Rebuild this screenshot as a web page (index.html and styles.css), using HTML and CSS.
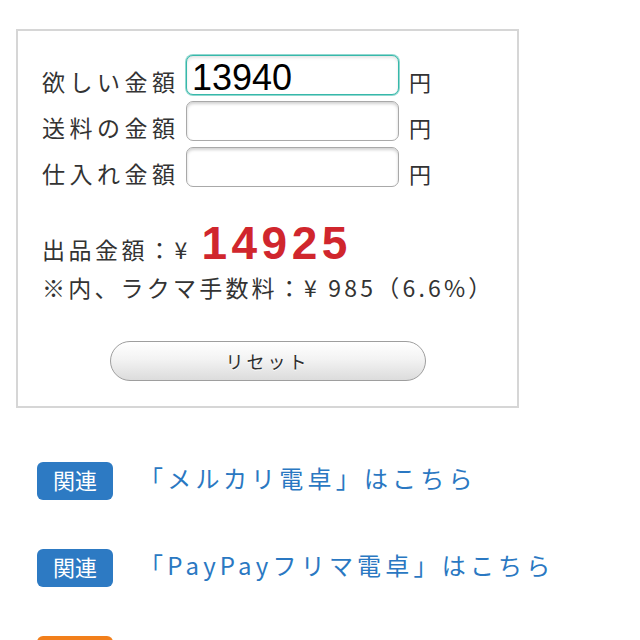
FILE: index.html
```html
<!DOCTYPE html>
<html lang="ja">
<head>
<meta charset="utf-8">
<title>ラクマ電卓</title>
<link rel="stylesheet" href="styles.css">
</head>
<body>
<div class="page">
  <div class="calc">
    <div class="rows">
      <div class="row">
        <label class="label">欲しい金額</label>
        <input class="field active" type="text" value="13940">
        <span class="unit">円</span>
      </div>
      <div class="row">
        <label class="label">送料の金額</label>
        <input class="field" type="text" value="">
        <span class="unit">円</span>
      </div>
      <div class="row">
        <label class="label">仕入れ金額</label>
        <input class="field" type="text" value="">
        <span class="unit">円</span>
      </div>
    </div>
    <div class="result">
      <div class="price-line"><span class="price-label">出品金額：¥ </span><span class="price">14925</span></div>
      <div class="fee-line">※内、ラクマ手数料：¥ 985（6.6%）</div>
    </div>
    <div class="actions">
      <button class="reset" type="button">リセット</button>
    </div>
  </div>
  <ul class="links">
    <li class="link-row"><span class="badge">関連</span><a class="link" href="#">「メルカリ電卓」はこちら</a></li>
    <li class="link-row"><span class="badge">関連</span><a class="link" href="#">「PayPayフリマ電卓」はこちら</a></li>
    <li class="link-row"><span class="badge badge-orange"></span></li>
  </ul>
</div>
</body>
</html>
```
FILE: styles.css
```css
html, body {
  margin: 0;
  padding: 0;
  background: #ffffff;
}
body {
  font-family: "Noto Sans CJK JP", "Noto Sans", sans-serif;
  color: #333333;
}
.page {
  padding: 29px 0 0 16px;
}
.calc {
  box-sizing: border-box;
  width: 503px;
  border: 2px solid #d6d6d6;
  padding: 24px 0 25px 24px;
}
.rows {
  display: flex;
  flex-direction: column;
  gap: 6px;
}
.row {
  display: flex;
  align-items: flex-end;
  height: 40px;
}
.label {
  width: 144px;
  font-size: 23px;
  line-height: 1;
  letter-spacing: 4.5px;
  color: #333333;
  margin-bottom: 2px;
  white-space: nowrap;
}
.field {
  box-sizing: border-box;
  width: 213px;
  height: 40px;
  margin: 0;
  border: 1px solid #a9a9a9;
  border-radius: 7px;
  padding: 6px 6px 0 5px;
  font-family: "Liberation Sans", Arial, sans-serif;
  font-size: 36px;
  color: #000000;
  background: #ffffff;
  box-shadow: inset 0 2px 3px rgba(0, 0, 0, 0.18);
  outline: none;
}
.field.active {
  border-color: #37b8aa;
  box-shadow: 0 0 0 1px rgba(55, 184, 170, 0.55), inset 0 2px 3px rgba(0, 0, 0, 0.1);
}
.unit {
  margin-left: 10px;
  font-size: 22px;
  line-height: 1;
  margin-bottom: 3px;
  color: #333333;
}
.result {
  margin-top: 33px;
}
.price-line {
  display: flex;
  align-items: baseline;
  height: 46px;
  line-height: 46px;
}
.price-label {
  font-size: 23px;
  letter-spacing: 3.5px;
  white-space: pre;
}
.price {
  font-family: "Liberation Sans", Arial, sans-serif;
  font-weight: bold;
  font-size: 46px;
  letter-spacing: 4.5px;
  color: #d0262d;
  margin-left: 2px;
}
.fee-line {
  margin-top: 2px;
  font-size: 23px;
  line-height: 38px;
  letter-spacing: 3.2px;
  white-space: nowrap;
}
.actions {
  display: flex;
  justify-content: center;
  margin-top: 35px;
  padding-right: 24px;
}
.reset {
  box-sizing: border-box;
  width: 316px;
  height: 40px;
  border: 1px solid #9e9e9e;
  border-radius: 20px;
  background: linear-gradient(#ffffff 0%, #f3f3f3 45%, #dcdcdc 100%);
  font-family: "Noto Sans CJK JP", sans-serif;
  font-size: 18px;
  letter-spacing: 3px;
  color: #2e2e2e;
  text-shadow: 0 1px 0 #ffffff;
  padding: 0;
}
.links {
  list-style: none;
  margin: 54px 0 0 0;
  padding: 0 0 0 21px;
  display: flex;
  flex-direction: column;
  gap: 49px;
}
.link-row {
  display: flex;
  align-items: center;
  height: 38px;
}
.badge {
  box-sizing: border-box;
  width: 76px;
  height: 38px;
  border-radius: 6px;
  background: #2d7ac3;
  color: #ffffff;
  font-size: 22px;
  line-height: 34px;
  padding-bottom: 4px;
  text-align: center;
}
.badge-orange {
  background: #f27f1b;
}
.link {
  margin-left: 26px;
  padding-bottom: 8px;
  font-size: 24px;
  letter-spacing: 4.2px;
  color: #2a78c2;
  text-decoration: none;
  white-space: nowrap;
}
```
